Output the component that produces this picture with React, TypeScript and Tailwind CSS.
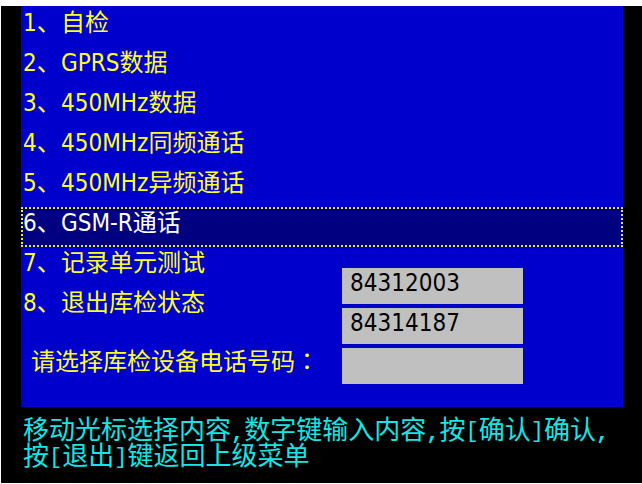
import { useState } from "react";

const menuItems = [
  "自检",
  "GPRS数据",
  "450MHz数据",
  "450MHz同频通话",
  "450MHz异频通话",
  "GSM-R通话",
  "记录单元测试",
  "退出库检状态",
];

const initialNumbers = ["84312003", "84314187", ""];

function Comma() {
  return <span className="font-['Liberation_Mono',monospace] text-[22px] leading-0 font-bold">,</span>;
}

function Key({ children }: { children: string }) {
  return (
    <kbd className="font-['Noto_Sans_CJK_SC',sans-serif] text-[26px]">
      <span className="align-[2px] font-['Liberation_Mono',monospace] text-[22px] leading-0">[</span>
      {children}
      <span className="align-[2px] font-['Liberation_Mono',monospace] text-[22px] leading-0">]</span>
    </kbd>
  );
}

function Menu() {
  const [selected, setSelected] = useState(5);
  return (
    <ol>
      {menuItems.map((item, index) => (
        <li key={item}>
          <button
            type="button"
            onClick={() => setSelected(index)}
            className={`flex h-10 w-full items-start border-2 border-dotted text-left leading-7 outline-none ${
              index === selected
                ? "border-[#e6e65a] bg-[#000080] text-white"
                : "border-transparent text-[#ffff28]"
            }`}
          >
            <span className="w-[38px] shrink-0 whitespace-nowrap">{index + 1}、</span>
            <span>{item}</span>
          </button>
        </li>
      ))}
    </ol>
  );
}

function PhoneForm() {
  const [numbers, setNumbers] = useState(initialNumbers);
  return (
    <form className="pointer-events-none relative -mt-[59px] flex items-end" onSubmit={(e) => e.preventDefault()}>
      <label htmlFor="phone-2" className="h-9 w-[321px] shrink-0 pl-2.5 leading-7 text-[#ffff28]">
        请选择库检设备电话号码
        <span className="font-['Noto_Sans_CJK_TC',sans-serif] leading-0" lang="zh-TW">：</span>
      </label>
      <div className="pointer-events-auto flex w-[181px] flex-col gap-1">
        {numbers.map((value, index) => (
          <input
            key={index}
            id={`phone-${index}`}
            type="text"
            aria-label={`电话号码 ${index + 1}`}
            value={value}
            onChange={(e) => setNumbers(numbers.map((n, i) => (i === index ? e.target.value : n)))}
            className="h-9 w-full bg-[#c0c0c0] px-2 pb-1.5 text-black outline-none"
          />
        ))}
      </div>
    </form>
  );
}

export default function App() {
  return (
    <div className="bg-white pt-1.5 pb-px pl-px font-['DejaVu_Sans_Condensed','Noto_Sans_CJK_SC',sans-serif] text-2xl">
      <div className="bg-black">
        <main className="mr-[19px] ml-5 bg-[#0000cd] pt-px pb-[23px]">
          <Menu />
          <PhoneForm />
        </main>
        <footer className="h-[76px] pt-2 pl-[22px] font-['Noto_Sans_CJK_SC',sans-serif] text-[26px] leading-[26px] whitespace-nowrap text-[#14e6e6]">
          <p>
            移动光标选择内容<Comma />数字键输入内容<Comma />按<Key>确认</Key>确认<Comma />
          </p>
          <p>
            按<Key>退出</Key>键返回上级菜单
          </p>
        </footer>
      </div>
    </div>
  );
}
